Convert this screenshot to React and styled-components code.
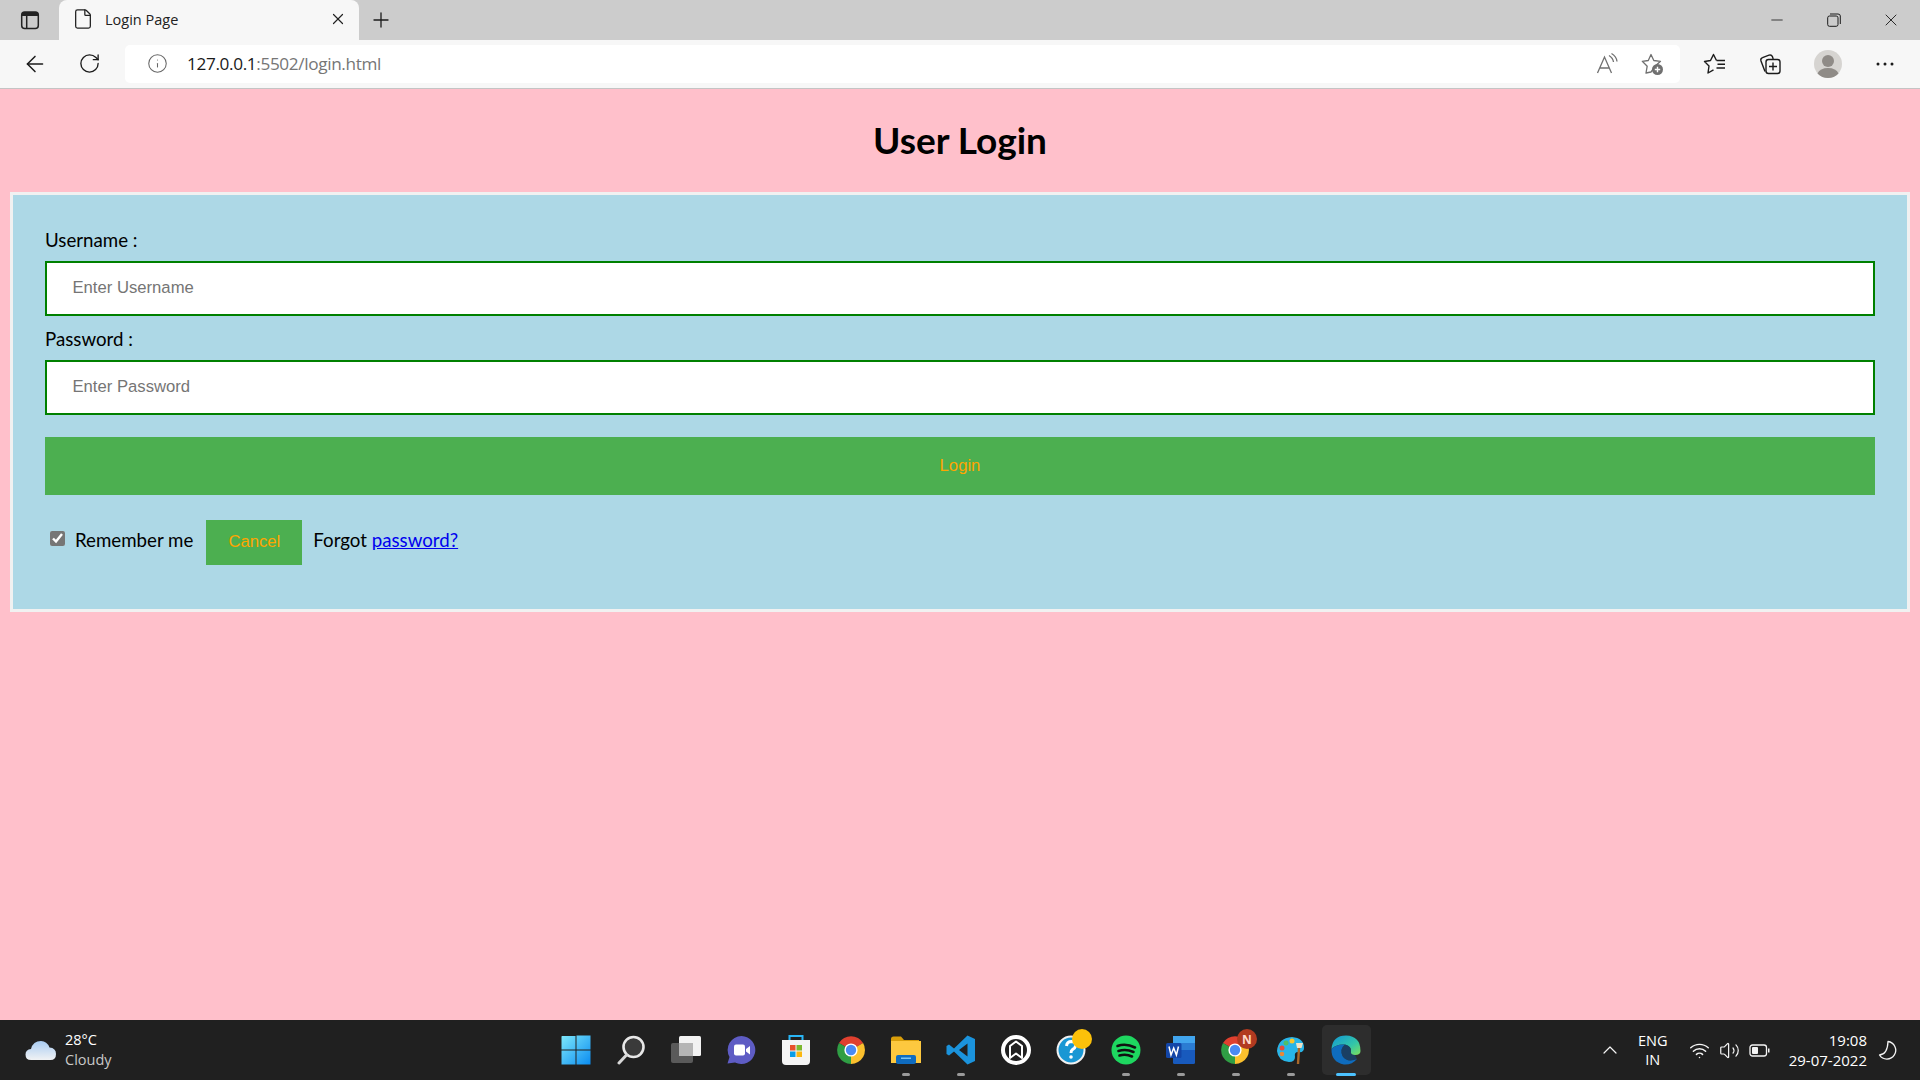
import React from 'react';
import styled, { createGlobalStyle } from 'styled-components';
import { ArrowLeft, RotateCw, Info, X, Plus, Minus, ChevronUp, Wifi, Volume2, File } from 'lucide-react';

const GlobalStyle = createGlobalStyle`
  html, body {
    margin: 0;
    padding: 0;
    height: 100%;
    overflow: hidden;
  }
  * { box-sizing: border-box; }
`;

const Page = styled.div`
  width: 1920px;
  height: 1080px;
  display: flex;
  flex-direction: column;
  background: #ffc0cb;
  overflow: hidden;
`;

/* browser chrome */
const TabStrip = styled.div`
  height: 40px;
  padding-right: 1px;
  background: #cccccc;
  display: flex;
  align-items: stretch;
`;

const IconSlot = styled.div`
  width: ${({ $w }) => $w || 45}px;
  flex: none;
  display: flex;
  align-items: center;
  justify-content: center;
  color: ${({ $color }) => $color || '#1b1b1b'};
`;

const RefreshSlot = styled(IconSlot)`
  margin-left: 10px;
`;

const Tab = styled.div`
  width: 300px;
  background: #f7f7f7;
  border-radius: 8px 8px 0 0;
  display: flex;
  align-items: center;
  padding: 0 12px 2px 13px;
  font: 14.5px 'Open Sans', sans-serif;
  color: #222;
`;

const TabTitle = styled.span`
  flex: 1;
  margin-left: 11px;
`;

const Spacer = styled.div`
  flex: 1;
`;

const Toolbar = styled.div`
  height: 49px;
  padding: 0 7px 1px 12px;
  background: #f7f7f7;
  border-bottom: 1px solid #c4c4c4;
  display: flex;
  align-items: center;
`;

const AddressBar = styled.div`
  flex: 1;
  height: 38px;
  margin: 0 5px 0 13px;
  padding: 0 16px 0 22px;
  background: #fff;
  border-radius: 5px;
  display: flex;
  align-items: center;
  gap: 21px;
`;

const Url = styled.div`
  flex: 1;
  font: 17.2px 'Open Sans', sans-serif;
  letter-spacing: -0.36px;
  color: #767676;
  margin-left: -2px;
`;

const Host = styled.span`
  color: #1a1a1a;
`;

/* login form */
const Main = styled.main`
  flex: 1;
  padding: 0 10px;
`;

const Heading = styled.h2`
  margin: 0;
  height: 103px;
  padding-top: 29px;
  text-align: center;
  font: 700 37px/44px Lato, sans-serif;
  letter-spacing: 0;
  color: #000;
`;

const FormBox = styled.form`
  border: 3px solid #f1f1f1;
  background: #add8e6;
  padding: 33px 32px 44px;
  height: 420px;
`;

const Label = styled.label`
  display: block;
  height: 24px;
  margin-bottom: 9px;
  font: 18.7px/24px Lato, sans-serif;
  color: #000;
`;

const TextInput = styled.input`
  display: block;
  width: 100%;
  height: 55px;
  margin-bottom: 11px;
  padding: 0 25.5px 2px;
  border: 2.5px solid green;
  border-radius: 0;
  background: #fff;
  outline: none;
  font: 16.67px 'Liberation Sans', sans-serif;

  &::placeholder {
    color: #757575;
    opacity: 1;
  }
`;

const LoginButton = styled.button`
  display: block;
  width: 100%;
  height: 58px;
  margin-top: 22px;
  border: none;
  background: #4caf50;
  color: orange;
  font: 16.67px 'Liberation Sans', sans-serif;
`;

const OptionsRow = styled.div`
  display: flex;
  align-items: center;
  height: 45px;
  margin-top: 25px;
  font: 18.7px Lato, sans-serif;
  color: #000;
`;

const CheckBox = styled.input`
  width: 15px;
  height: 15px;
  margin: -9px 10px 0 5px;
  accent-color: #767676;
`;

const RowText = styled.span`
  margin-bottom: 5px;
  white-space: pre;
`;

const CancelButton = styled.button`
  width: 96px;
  height: 45px;
  margin: 0 11px 0 13px;
  padding: 0 0 2px;
  border: none;
  background: #4caf50;
  color: orange;
  font: 16.67px 'Liberation Sans', sans-serif;
`;

const ForgotLink = styled.a`
  color: #0000ee;
  text-decoration: underline;
`;

/* windows taskbar */
const Taskbar = styled.footer`
  height: 60px;
  background: #202020;
  display: grid;
  grid-template-columns: 1fr auto 1fr;
  align-items: center;
  font-family: 'Open Sans', sans-serif;
  color: #fff;
`;

const Weather = styled.div`
  display: flex;
  align-items: center;
  padding-left: 25px;
  gap: 8px;
`;

const WeatherText = styled.div`
  font-size: 14.5px;
  line-height: 20px;
`;

const WeatherSub = styled.div`
  color: #c8c8c8;
`;

const AppList = styled.div`
  display: flex;
  height: 60px;
  margin-left: 2px;
`;

const AppItem = styled.div`
  position: relative;
  width: 55px;
  display: flex;
  align-items: center;
  justify-content: center;

  ${({ $active }) => $active && `
    &::before {
      content: '';
      position: absolute;
      left: 3px;
      right: 3px;
      top: 5px;
      bottom: 5px;
      background: #2d2d2d;
      border-radius: 5px;
    }
  `}

  svg {
    position: relative;
    flex: none;
  }
`;

const RunDot = styled.span`
  position: absolute;
  left: 50%;
  bottom: 4px;
  width: ${({ $active }) => ($active ? 20 : 8)}px;
  height: 3px;
  border-radius: 2px;
  transform: translateX(-50%);
  background: ${({ $active }) => ($active ? '#4cc2ff' : '#9a9a9a')};
`;

const Tray = styled.div`
  display: flex;
  align-items: center;
  justify-content: flex-end;
  height: 60px;
  padding-right: 22px;
`;

const TrayIcon = styled.div`
  width: 30px;
  display: flex;
  justify-content: center;
  color: #f4f4f4;
`;

const LangBlock = styled.div`
  width: 46px;
  margin: 0 9px 0 5px;
  text-align: center;
  font-size: 14.5px;
  line-height: 19.5px;
`;

const Clock = styled.div`
  margin: -1px 11px 0 14px;
  text-align: right;
  font-size: 15px;
  line-height: 20px;
`;

const SidebarIcon = () => (
  <svg width="20" height="20" viewBox="0 0 20 20" fill="none">
    <rect x="1.7" y="2" width="16.6" height="16.4" rx="3" stroke="#222" strokeWidth="1.5" />
    <path d="M2 3.5 Q2 2 4 2 H16 Q18 2 18 3.5 V6 H2 Z" fill="#222" />
    <path d="M6.7 6 V18" stroke="#222" strokeWidth="1.5" />
  </svg>
);

const ReadAloudIcon = () => (
  <svg width="24" height="24" viewBox="0 0 24 24" fill="none" stroke="#707070" strokeWidth="1.3">
    <path d="M2.5 21 L9.5 5 L16.5 21 M5 16 H14" />
    <path d="M14 3.5 Q18 6 18.5 10 M16.5 1.5 Q21.5 4.5 22 9.5" />
  </svg>
);

const FavAddIcon = () => (
  <svg width="24" height="24" viewBox="0 0 24 24" fill="none">
    <path d="M11 2.5 L13.8 8.5 L20.5 9.3 L15.6 13.7 L11 20 L6 21 L7.2 14.2 L2.3 9.3 L8.3 8.5 Z" stroke="#707070" strokeWidth="1.3" strokeLinejoin="round" />
    <circle cx="17.5" cy="17.5" r="5.5" fill="#707070" />
    <path d="M17.5 14.8 V20.2 M14.8 17.5 H20.2" stroke="#fff" strokeWidth="1.4" />
  </svg>
);

const FavoritesIcon = () => (
  <svg width="24" height="24" viewBox="0 0 24 24" fill="none" stroke="#1b1b1b" strokeWidth="1.4" strokeLinejoin="round">
    <path d="M14.5 8.5 L11.5 2.5 L8.5 8.5 L2.5 9.5 L7 14 L6 21 L11.5 17.8" />
    <path d="M14.5 8.5 H23 M15.5 12.3 H23 M14.5 16 H23" />
  </svg>
);

const CollectionsIcon = () => (
  <svg width="24" height="24" viewBox="0 0 24 24" fill="none" stroke="#1b1b1b" strokeWidth="1.4">
    <path d="M6 19.5 L2 9 Q1.2 6.5 3.5 5.7 L10 3.2 Q12.5 2.5 13.4 4.6 L14.2 7" />
    <rect x="7" y="7.5" width="14" height="14" rx="2.5" />
    <path d="M14 10.5 V18.5 M10 14.5 H18" />
  </svg>
);

const ProfileIcon = () => (
  <svg width="28" height="28" viewBox="0 0 28 28">
    <circle cx="14" cy="14" r="14" fill="#d6d4d1" />
    <circle cx="14" cy="11" r="6" fill="#8f8b87" />
    <path d="M3.5 23.5 Q6 18 14 18 Q22 18 24.5 23.5 Q20 28 14 28 Q8 28 3.5 23.5 Z" fill="#8f8b87" />
  </svg>
);

const DotsIcon = () => (
  <svg width="20" height="6" viewBox="0 0 20 6" fill="#1b1b1b">
    <circle cx="3" cy="3" r="1.5" />
    <circle cx="10" cy="3" r="1.5" />
    <circle cx="17" cy="3" r="1.5" />
  </svg>
);

const RestoreIcon = () => (
  <svg width="14" height="14" viewBox="0 0 14 14" fill="none" stroke="#1b1b1b" strokeWidth="1">
    <rect x="0.7" y="3" width="10.3" height="10.3" rx="1.8" />
    <path d="M3 1 H11 Q13.3 1 13.3 3 V11" />
  </svg>
);

const CloudIcon = () => (
  <svg width="32" height="22" viewBox="0 0 32 22">
    <defs>
      <linearGradient id="cloudFill" x1="0" y1="0" x2="0" y2="1">
        <stop offset="0" stopColor="#a9ccf2" />
        <stop offset="1" stopColor="#f0f2f4" />
      </linearGradient>
    </defs>
    <path d="M6 21 Q0.5 21 0.5 15.5 Q0.5 10.5 6 10 Q8 2 16 2 Q22 2 24.5 8.5 Q31 9 31 15 Q31 21 25.5 21 Z" fill="url(#cloudFill)" />
  </svg>
);

const WindowsLogo = () => (
  <svg width="30" height="30" viewBox="0 0 30 30">
    <defs>
      <linearGradient id="winFill" x1="0" y1="0" x2="1" y2="1">
        <stop offset="0" stopColor="#7ee8fb" />
        <stop offset="1" stopColor="#0a8cf0" />
      </linearGradient>
    </defs>
    <path d="M1 1 H14.5 V14.5 H0.5 V1.5 Z M15.5 0.5 H29.5 V14.5 H15.5 Z M0.5 15.5 H14.5 V29.5 H0.5 Z M15.5 15.5 H29.5 V29.5 H15.5 Z" fill="url(#winFill)" />
  </svg>
);

const SearchGlass = () => (
  <svg width="30" height="30" viewBox="0 0 30 30" fill="none">
    <circle cx="17.5" cy="12" r="10" fill="#3a3a3a" stroke="#e8e8e8" strokeWidth="2.6" />
    <path d="M10.5 20 L3 28" stroke="#d8d8d8" strokeWidth="3" strokeLinecap="round" />
  </svg>
);

const TaskViewIcon = () => (
  <svg width="32" height="30" viewBox="0 0 32 30">
    <rect x="1" y="8" width="22" height="20" rx="2" fill="#5a5a5a" />
    <rect x="9" y="1" width="22" height="20" rx="1.5" fill="#f2f2f2" />
    <rect x="9" y="8" width="14" height="13" fill="#b5b5b5" />
  </svg>
);

const TeamsChatIcon = () => (
  <svg width="30" height="30" viewBox="0 0 30 30">
    <path d="M15.5 1 A14 14 0 1 1 9 27.5 L1.5 28.5 L3.5 22 A14 14 0 0 1 15.5 1 Z" fill="#5e5cc4" />
    <rect x="8" y="9.5" width="11" height="11" rx="2" fill="#fff" />
    <path d="M20 14 L24 11 V19.5 L20 16.5 Z" fill="#fff" />
  </svg>
);

const StoreIcon = () => (
  <svg width="30" height="32" viewBox="0 0 30 32" fill="none">
    <path d="M8.5 6 V2 H21.5 V6" stroke="#29b6f6" strokeWidth="2" />
    <path d="M1 6 H29 V27 Q29 31 25 31 H5 Q1 31 1 27 Z" fill="#f4f4f4" />
    <rect x="9" y="11" width="5.5" height="5.5" fill="#e8502a" />
    <rect x="15.5" y="11" width="5.5" height="5.5" fill="#7cb82f" />
    <rect x="9" y="17.5" width="5.5" height="5.5" fill="#0a9de8" />
    <rect x="15.5" y="17.5" width="5.5" height="5.5" fill="#fbb812" />
  </svg>
);

const ChromeRing = () => (
  <>
    <path d="M14 14 L2 7 A14 14 0 0 1 26.1 7 Z" fill="#e0402f" />
    <path d="M14 14 L26.1 7 A14 14 0 0 1 14 28 Z" fill="#fbc02d" />
    <path d="M14 14 L14 28 A14 14 0 0 1 2 7 Z" fill="#2f9e44" />
    <circle cx="14" cy="14" r="6.6" fill="#fff" />
    <circle cx="14" cy="14" r="5.2" fill="#4a8af4" />
  </>
);

const ChromeIcon = () => (
  <svg width="28" height="28" viewBox="0 0 28 28">
    <ChromeRing />
  </svg>
);

const FolderIcon = () => (
  <svg width="30" height="28" viewBox="0 0 30 28">
    <path d="M0 3 Q0 0.5 2.5 0.5 H10 L13 4 H28 V10 H0 Z" fill="#d99e0a" />
    <path d="M0 5 H30 V27 H0 Z" fill="#fdc83f" />
    <rect x="5" y="19" width="20" height="9" rx="2" fill="#0f6cc0" />
    <rect x="10" y="21.5" width="10" height="1.5" fill="#7bc4f5" />
  </svg>
);

const VsCodeIcon = () => (
  <svg width="30" height="30" viewBox="0 0 30 30">
    <path d="M21.5 0.5 L29 4 V26 L21.5 29.5 L8 16.5 L3 20.5 L0.5 19 V11 L3 9.5 L8 13.5 Z M21.5 8.5 L13 15 L21.5 21.5 Z" fill="#1b93dc" />
  </svg>
);

const HouseRingIcon = () => (
  <svg width="30" height="30" viewBox="0 0 30 30" fill="none">
    <circle cx="15" cy="15" r="13" stroke="#fff" strokeWidth="4" fill="#202020" />
    <path d="M9 23 V11 L15 6.5 L21 11 V23 L15 18.5 Z" stroke="#fff" strokeWidth="2" strokeLinejoin="round" />
  </svg>
);

const HelpIcon = () => (
  <svg width="44" height="44" viewBox="0 0 44 44" fill="none">
    <circle cx="22" cy="22" r="13.5" fill="#1997d4" stroke="#f1f1f1" strokeWidth="2" />
    <path d="M17.5 18 Q18 13.5 22.5 13.5 Q27 14 26.5 18 Q26 20.5 23.5 21.5 Q22 22.5 22 25" stroke="#fff" strokeWidth="3" />
    <circle cx="22" cy="29" r="1.8" fill="#fff" />
    <circle cx="33" cy="11" r="10" fill="#fcc10a" />
  </svg>
);

const SpotifyIcon = () => (
  <svg width="30" height="30" viewBox="0 0 30 30" fill="none">
    <circle cx="15" cy="15" r="14.5" fill="#1ed760" />
    <path d="M6.5 11 Q15 8 24 12.5 M7.5 16 Q15 13.5 22.5 17 M8.5 20.5 Q15 18.5 21 21.5" stroke="#111" strokeWidth="2.6" strokeLinecap="round" />
  </svg>
);

const WordIcon = () => (
  <svg width="30" height="30" viewBox="0 0 30 30">
    <rect x="7" y="1" width="22" height="28" rx="1.5" fill="#185abd" />
    <rect x="7" y="1" width="22" height="7" fill="#41a5ee" />
    <rect x="7" y="8" width="22" height="7" fill="#2b7cd3" />
    <rect x="0" y="8" width="15.5" height="15" rx="1.5" fill="#1346a8" />
    <path d="M3 11.5 L5 20 L7.7 13 L10.4 20 L12.5 11.5" fill="none" stroke="#fff" strokeWidth="1.5" />
  </svg>
);

const ChromeNewsIcon = () => (
  <svg width="44" height="44" viewBox="0 0 44 44">
    <g transform="translate(7 8)">
      <ChromeRing />
    </g>
    <circle cx="33" cy="11" r="10" fill="#b23a20" />
    <text x="33" y="15.5" textAnchor="middle" fontSize="12" fontWeight="700" fontFamily="'Open Sans', sans-serif" fill="#ffd9cc">N</text>
  </svg>
);

const PaletteIcon = () => (
  <svg width="30" height="30" viewBox="0 0 30 30">
    <path d="M16 2 Q28 3 28 13 Q28 18 22 17 Q18 17 19 22 Q19 27 13 27 Q2 26 1 16 Q2 3 16 2 Z" fill="#28b5e8" />
    <circle cx="6" cy="13" r="2.5" fill="#e34b3c" />
    <circle cx="10" cy="8" r="2.5" fill="#4fbf67" />
    <circle cx="16" cy="6" r="2.5" fill="#f8c62d" />
    <circle cx="6" cy="19" r="2.3" fill="#e8883a" />
    <path d="M23 13 L22 29" stroke="#a8682a" strokeWidth="2.4" />
    <path d="M20 8 H27 L25.5 13 H21 Z" fill="#efe3c8" />
  </svg>
);

const EdgeIcon = () => (
  <svg width="30" height="30" viewBox="0 0 30 30">
    <defs>
      <linearGradient id="edgeTop" x1="0" y1="0" x2="1" y2="1">
        <stop offset="0" stopColor="#1196d6" />
        <stop offset="0.6" stopColor="#33c6a8" />
        <stop offset="1" stopColor="#7ee05a" />
      </linearGradient>
    </defs>
    <path d="M0.5 14 Q1.5 0.5 15 0.5 Q29.5 1 29.5 16 Q29.5 20 24 20 Q19 20 20 16 Q20.5 11 14 9.5 Q5 9 0.5 14 Z" fill="url(#edgeTop)" />
    <path d="M0.5 14 Q0 27 13 29.5 Q21 30 26 24 Q16 28 11.5 21 Q8.5 14 14 9.5 Q5 9 0.5 14 Z" fill="#0f6cbd" />
    <path d="M14 9.5 Q8.5 14 11.5 21 Q16 28 26 24 L24 20 Q19 20 20 16 Q20 11 14 9.5 Z" fill="#0b4f8f" opacity="0.55" />
  </svg>
);

const BatteryIcon = () => (
  <svg width="21" height="13" viewBox="0 0 21 13" fill="none">
    <rect x="1" y="1" width="16.5" height="11" rx="2.5" stroke="#f4f4f4" strokeWidth="1.3" />
    <rect x="3" y="3" width="6" height="7" rx="1" fill="#f4f4f4" />
    <path d="M19 4.5 H20.5 V8.5 H19 Z" fill="#f4f4f4" />
  </svg>
);

const CrescentIcon = () => (
  <svg width="20" height="20" viewBox="0 0 20 20" fill="none" stroke="#f4f4f4" strokeWidth="1.3" strokeLinejoin="round">
    <path d="M10 1.5 A8.8 8.8 0 1 1 1.5 15 Q9.5 14.5 10 1.5 Z" />
  </svg>
);

const apps = [
  { id: 'start', icon: <WindowsLogo /> },
  { id: 'search', icon: <SearchGlass /> },
  { id: 'taskview', icon: <TaskViewIcon /> },
  { id: 'chat', icon: <TeamsChatIcon /> },
  { id: 'store', icon: <StoreIcon /> },
  { id: 'chrome', icon: <ChromeIcon /> },
  { id: 'files', icon: <FolderIcon />, running: true },
  { id: 'vscode', icon: <VsCodeIcon />, running: true },
  { id: 'housering', icon: <HouseRingIcon /> },
  { id: 'help', icon: <HelpIcon /> },
  { id: 'spotify', icon: <SpotifyIcon />, running: true },
  { id: 'word', icon: <WordIcon />, running: true },
  { id: 'chromeNews', icon: <ChromeNewsIcon />, running: true },
  { id: 'paint', icon: <PaletteIcon />, running: true },
  { id: 'edge', icon: <EdgeIcon />, running: true, active: true },
];

const App = () => (
  <Page>
    <GlobalStyle />
    <TabStrip>
      <IconSlot $w={59}><SidebarIcon /></IconSlot>
      <Tab>
        <File size={22} strokeWidth={1.4} />
        <TabTitle>Login Page</TabTitle>
        <X size={18} strokeWidth={1.6} />
      </Tab>
      <IconSlot $w={43}><Plus size={24} strokeWidth={1.3} /></IconSlot>
      <Spacer />
      <IconSlot $w={57}><Minus size={18} strokeWidth={1.1} /></IconSlot>
      <IconSlot $w={57}><RestoreIcon /></IconSlot>
      <IconSlot $w={57}><X size={20} strokeWidth={1.1} /></IconSlot>
    </TabStrip>
    <Toolbar>
      <IconSlot><ArrowLeft size={26} strokeWidth={1.4} /></IconSlot>
      <RefreshSlot><RotateCw size={23} strokeWidth={1.4} /></RefreshSlot>
      <AddressBar>
        <Info size={21} strokeWidth={1.2} color="#666" />
        <Url><Host>127.0.0.1</Host>:5502/login.html</Url>
        <ReadAloudIcon />
        <FavAddIcon />
      </AddressBar>
      <IconSlot $w={57}><FavoritesIcon /></IconSlot>
      <IconSlot $w={57}><CollectionsIcon /></IconSlot>
      <IconSlot $w={57}><ProfileIcon /></IconSlot>
      <IconSlot $w={57}><DotsIcon /></IconSlot>
    </Toolbar>

    <Main>
      <Heading>User Login</Heading>
      <FormBox onSubmit={(e) => e.preventDefault()}>
        <Label htmlFor="username">Username :</Label>
        <TextInput id="username" type="text" placeholder="Enter Username" />
        <Label htmlFor="password">Password :</Label>
        <TextInput id="password" type="password" placeholder="Enter Password" />
        <LoginButton type="submit">Login</LoginButton>
        <OptionsRow>
          <CheckBox type="checkbox" defaultChecked />
          <RowText>Remember me</RowText>
          <CancelButton type="button">Cancel</CancelButton>
          <RowText>Forgot <ForgotLink href="#forgot">password?</ForgotLink></RowText>
        </OptionsRow>
      </FormBox>
    </Main>

    <Taskbar>
      <Weather>
        <CloudIcon />
        <WeatherText>
          <div>28°C</div>
          <WeatherSub>Cloudy</WeatherSub>
        </WeatherText>
      </Weather>
      <AppList>
        {apps.map((app) => (
          <AppItem key={app.id} $active={app.active}>
            {app.icon}
            {app.running && <RunDot $active={app.active} />}
          </AppItem>
        ))}
      </AppList>
      <Tray>
        <TrayIcon><ChevronUp size={24} strokeWidth={1.2} /></TrayIcon>
        <LangBlock>
          <div>ENG</div>
          <div>IN</div>
        </LangBlock>
        <TrayIcon><Wifi size={21} strokeWidth={1.7} /></TrayIcon>
        <TrayIcon><Volume2 size={21} strokeWidth={1.4} /></TrayIcon>
        <TrayIcon><BatteryIcon /></TrayIcon>
        <Clock>
          <div>19:08</div>
          <div>29-07-2022</div>
        </Clock>
        <CrescentIcon />
      </Tray>
    </Taskbar>
  </Page>
);

export default App;
